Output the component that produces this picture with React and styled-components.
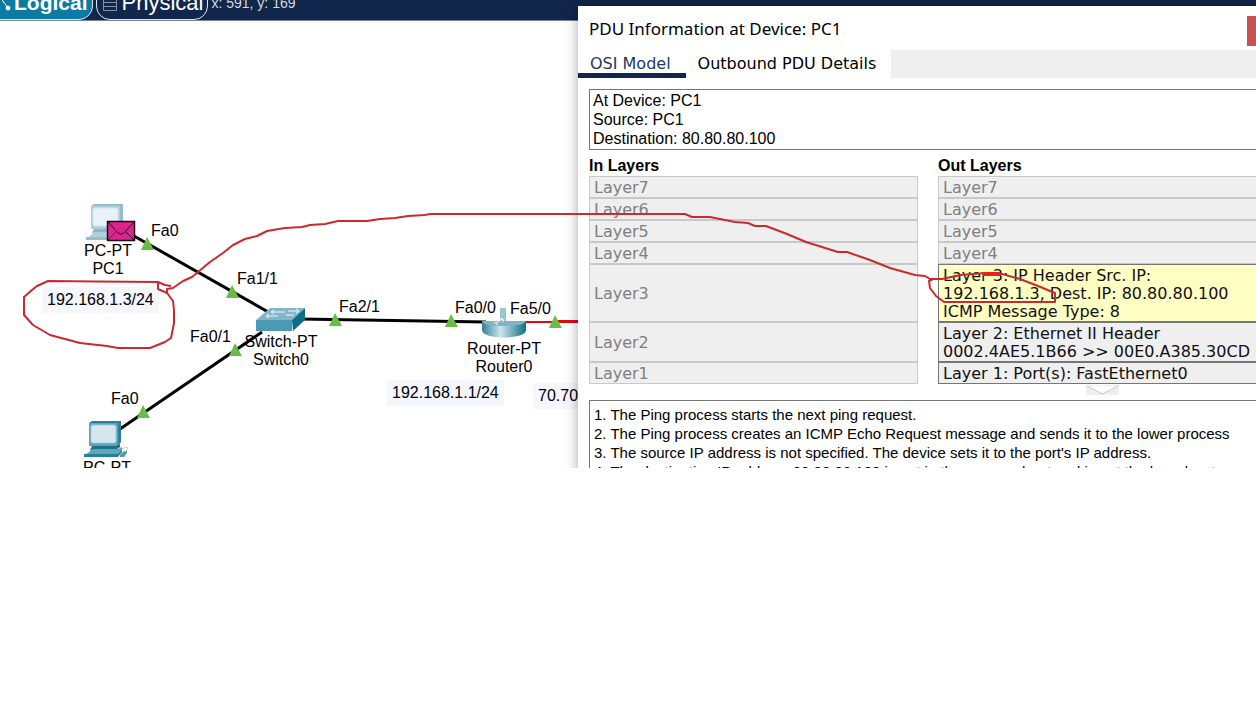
import React from "react";
import styled, { createGlobalStyle } from "styled-components";

const sans = '"Liberation Sans", Arial, sans-serif';
const wide = '"DejaVu Sans", Verdana, sans-serif';

const GlobalStyle = createGlobalStyle`
  * { box-sizing: border-box; }
  body { margin: 0; background: #fff; color: #000; font: 16px/18px ${sans}; overflow-x: hidden; }
  button { margin: 0; font: inherit; color: inherit; }
`;

const Screen = styled.main`
  position: relative;
  display: flex;
  flex-direction: column;
  height: 468px;
  overflow: hidden;
  background: #fff;
`;

const Toolbar = styled.header`
  flex: none;
  display: flex;
  align-items: flex-end;
  gap: 3px;
  height: 21px;
  overflow: hidden;
  background: #10264b;
  border-bottom: 1px solid #7a8494;
`;

const ViewButton = styled.button`
  flex: none;
  display: flex;
  align-items: center;
  gap: ${(p) => (p.$active ? 2 : 4)}px;
  height: 34px;
  margin-left: ${(p) => (p.$active ? -20 : 0)}px;
  padding: 0 4px 0 5px;
  border: 1px solid #dfe8ef;
  border-radius: 14px;
  background: ${(p) => (p.$active ? "#0b7ba3" : "#10264b")};
  color: #fff;
  font: ${(p) => (p.$active ? "bold 21px" : "22px")}/24px ${sans};
`;

const Coordinates = styled.output`
  height: 24px;
  color: #d5dae2;
  font: 14px/14px ${sans};
`;

const Canvas = styled.section`
  position: relative;
  flex: 1;
`;

const Drawing = styled.svg`
  position: absolute;
  left: 0;
  top: 0;
  overflow: visible;
  pointer-events: none;
`;

const Label = styled.span`
  position: absolute;
  left: ${(p) => p.$x}px;
  top: ${(p) => p.$y}px;
  transform: ${(p) => (p.$centred ? "translateX(-50%)" : "none")};
  white-space: pre;
  text-align: center;
  line-height: 18px;
`;

const Note = styled(Label)`
  padding: 4px 5px;
  background: #f5f6fe;
`;

const Dialog = styled.section`
  position: absolute;
  left: 578px;
  right: -22px;
  top: 6px;
  background: #fff;
  box-shadow: 0 0 12px rgba(0, 0, 0, 0.35);
`;

const TitleBar = styled.header`
  display: flex;
  justify-content: space-between;
  height: 44px;
  padding: 10px 0 4px 11px;
`;

const Title = styled.h1`
  margin: 0;
  font: 17px/26px "Noto Sans", "Open Sans", sans-serif;
`;

const CloseButton = styled.button`
  width: 31px;
  height: 30px;
  border: 0;
  background: #c75050;
`;

const Tabs = styled.div`
  display: flex;
  height: 28px;
  background: #efefef;
`;

const Tab = styled.button`
  padding: 5px 15px 0 12px;
  border: 0;
  border-bottom: 5px solid ${(p) => (p.$active ? "#10264b" : "#fff")};
  background: #fff;
  color: ${(p) => (p.$active ? "#1f3861" : "#000")};
  font: 16px/18px ${wide};
`;

const Body = styled.div`
  display: flex;
  flex-direction: column;
  padding: 11px 11px 0;
`;

const Summary = styled.div`
  padding: 1px 3px;
  border: 1px solid #767676;
  line-height: 19px;
`;

const Columns = styled.div`
  display: grid;
  grid-template-columns: 1fr 1fr;
  column-gap: 20px;
  padding-top: 6px;
`;

const Column = styled.div`
  display: flex;
  flex-direction: column;
`;

const Heading = styled.h2`
  margin: 0;
  font: bold 16px/20px ${sans};
`;

const tones = {
  idle: { line: "#c8c8c8", fill: "#efefef", ink: "#808080" },
  used: { line: "#767676", fill: "#efefef", ink: "#111" },
  current: { line: "#767676", fill: "#ffffc4", ink: "#111" },
};

const Layer = styled.button`
  height: ${(p) => 4 + p.$lines * 18}px;
  padding: 2px 4px 0;
  border: 1px solid ${(p) => tones[p.$tone].line};
  background: ${(p) => tones[p.$tone].fill};
  color: ${(p) => tones[p.$tone].ink};
  font: 16px/18px ${wide};
  text-align: left;
  white-space: pre;
`;

const Collapse = styled.button`
  align-self: center;
  display: flex;
  width: 33px;
  height: 10px;
  margin-top: 1px;
  padding: 0;
  border: 0;
  background: #efefef;
`;

const Steps = styled.div`
  height: 90px;
  margin-top: 5px;
  padding: 4px;
  border: 1px solid #767676;
  font-size: 15px;
  line-height: 19px;
  white-space: nowrap;
`;

const Step = styled.p`
  margin: 0;
`;

const inLayers = [
  ["Layer7", 1], ["Layer6", 1], ["Layer5", 1], ["Layer4", 1],
  ["Layer3", 3], ["Layer2", 2], ["Layer1", 1],
];

const outLayers = [
  ["Layer7", 1, "idle"], ["Layer6", 1, "idle"], ["Layer5", 1, "idle"], ["Layer4", 1, "idle"],
  ["Layer 3: IP Header Src. IP:\n192.168.1.3, Dest. IP: 80.80.80.100\nICMP Message Type: 8", 3, "current"],
  ["Layer 2: Ethernet II Header\n0002.4AE5.1B66 >> 00E0.A385.30CD", 2, "used"],
  ["Layer 1: Port(s): FastEthernet0", 1, "used"],
];

const steps = [
  "1. The Ping process starts the next ping request.",
  "2. The Ping process creates an ICMP Echo Request message and sends it to the lower process",
  "3. The source IP address is not specified. The device sets it to the port's IP address.",
  "4. The destination IP address 80.80.80.100 is not in the same subnet and is not the broadcast",
];

const portLights = [[147, 239], [232, 287], [235, 345], [335, 315], [451, 316], [555, 317], [143, 407]];

const ports = [
  ["Fa0", 151, 201], ["Fa1/1", 237, 249], ["Fa2/1", 339, 277], ["Fa0/0", 455, 278],
  ["Fa5/0", 510, 279], ["Fa0/1", 190, 307], ["Fa0", 111, 369],
];

const devices = [
  ["PC-PT\nPC1", 108, 221], ["Switch-PT\nSwitch0", 281, 312],
  ["Router-PT\nRouter0", 504, 319], ["PC-PT", 107, 438],
];

function Computer({ x, y, faded }) {
  return (
    <g transform={`translate(${x} ${y})`} opacity={faded ? 0.5 : 1}>
      <path d="M5 2 L8 0 H37 V21 L34 25 H5 Z" fill="#2b7f98" />
      <path d="M5 2 H34 V25 H5 Z" fill="#5ba3b8" />
      <rect x="7" y="4" width="25" height="18" rx="2" fill="#d5e6ee" stroke="#a9cbd7" />
      <path d="M8 25 H32 L36 23 V26 L32 29 H6 Z" fill="#1f6f88" />
      <path d="M5 31 L8 28 H34 L38 26 V31 L34 35 H0 Z" fill="#5fa6ba" />
      <path d="M0 33 H34 L38 29 V31 L34 36 H0 Z" fill="#2b8099" />
      <path d="M36 34 L40 30 H43 V32 L40 36 H36 Z" fill="#4c9ab1" />
      <path d="M38 28 L43 26 L44 28 L41 31" fill="none" stroke="#b9d5df" />
    </g>
  );
}

export default function App() {
  return (
    <>
      <GlobalStyle />
      <Screen>
        <Toolbar>
          <ViewButton $active>
            <svg width="26" height="24" viewBox="0 0 26 24" fill="none" stroke="#fff">
              <path d="M14 6 L22 17 M14 6 L6 17" />
              <circle cx="22" cy="17" r="2" fill="#fff" />
              <circle cx="6" cy="17" r="2" fill="#fff" />
            </svg>
            Logical
          </ViewButton>
          <ViewButton>
            <svg width="16" height="24" viewBox="0 0 16 24" fill="none" stroke="#8390a6">
              <path d="M1.500 3.500 H14.500 V19.500 H1.500 Z M2 7.500 H14 M2 11.500 H14 M2 15.500 H14" />
            </svg>
            Physical
          </ViewButton>
          <Coordinates>x: 591, y: 169</Coordinates>
        </Toolbar>

        <Canvas aria-label="Logical topology">
          <Drawing width="578" height="447" viewBox="0 21 578 447">
            <g stroke="#000" strokeWidth="3" fill="none">
              <path d="M134 236 L270 313" />
              <path d="M262 332 L120 429" />
              <path d="M300 319 L486 322" />
            </g>
            <path d="M520 322 H556" stroke="#dd0a14" strokeWidth="2" />
            <path d="M556 321.500 H578" stroke="#dd0a14" strokeWidth="3" />
            <Computer x={86} y={204} faded />
            <Computer x={84} y={421} />
            <g stroke="#1c0714" strokeWidth="1">
              <rect x="107.500" y="221.500" width="27" height="19" fill="#dc2390" strokeWidth="1.500" />
              <path d="M108 222 L117 232 Q121 236 125 232 L134 222 M108 240 L117 231 M134 240 L125 231" fill="none" />
            </g>
            <g>
              <path d="M256 320 L270 308 H305 L292 320 Z" fill="#83b6c8" />
              <path d="M256 320 H292 V331 H256 Z" fill="#4b99b2" />
              <path d="M292 320 L305 308 V320 L293 331 Z" fill="#0c6d88" />
              <path d="M272 312 H285 M288 311 H298 M267 316 H278 M286 315 H294 M274 310 L271 312 L274 314 M296 309 L299 311 L296 313 M269 314 L266 316 L269 318" fill="none" stroke="#eff7fa" />
            </g>
            <g>
              <defs>
                <linearGradient id="router" x1="0" x2="1">
                  <stop offset="0" stopColor="#2f8298" />
                  <stop offset="0.420" stopColor="#cfe4eb" />
                  <stop offset="1" stopColor="#0f6f88" />
                </linearGradient>
              </defs>
              <rect x="500" y="308" width="6" height="14" fill="#9dc2d0" />
              <path d="M482 321 H526 V330 C526 340 482 340 482 330 Z" fill="url(#router)" />
              <path d="M482 321 H526 Q524 326 504 326 Q484 326 482 321 Z" fill="#7fb2c3" />
              <path d="M496 323 L502 319 M499 319 H503 V322 M498 325 L494 322" fill="none" stroke="#fff" />
            </g>
            {portLights.map(([x, y]) => (
              <path key={`${x}-${y}`} d={`M${x} ${y - 2} L${x + 7} ${y + 11} H${x - 6} Z`} fill="#69bd45" />
            ))}
          </Drawing>
          {ports.map(([text, x, y]) => (
            <Label key={`${text}-${x}`} $x={x} $y={y}>{text}</Label>
          ))}
          {devices.map(([text, x, y]) => (
            <Label key={`${text}-${x}`} $x={x} $y={y} $centred>{text}</Label>
          ))}
          <Note $x={42} $y={266}>192.168.1.3/24</Note>
          <Note $x={387} $y={359}>192.168.1.1/24</Note>
          <Note $x={533} $y={362}>70.70</Note>
        </Canvas>

        <Dialog role="dialog" aria-labelledby="pdu-title">
          <TitleBar>
            <Title id="pdu-title">PDU Information at Device: PC1</Title>
            <CloseButton aria-label="Close" />
          </TitleBar>
          <Tabs role="tablist">
            <Tab role="tab" aria-selected="true" $active>OSI Model</Tab>
            <Tab role="tab" aria-selected="false">Outbound PDU Details</Tab>
          </Tabs>
          <Body>
            <Summary>
              At Device: PC1<br />Source: PC1<br />Destination: 80.80.80.100
            </Summary>
            <Columns>
              <Column>
                <Heading>In Layers</Heading>
                {inLayers.map(([text, lines]) => (
                  <Layer key={text} $lines={lines} $tone="idle">{text}</Layer>
                ))}
              </Column>
              <Column>
                <Heading>Out Layers</Heading>
                {outLayers.map(([text, lines, tone]) => (
                  <Layer key={text} $lines={lines} $tone={tone}>{text}</Layer>
                ))}
                <Collapse aria-label="Collapse layers">
                  <svg width="33" height="10" viewBox="0 0 33 10">
                    <path d="M1 1 L16.500 9 L32 1 Z" fill="#fff" />
                    <path d="M1 1 L16.500 9 L32 1" fill="none" stroke="#c8c8c8" />
                  </svg>
                </Collapse>
              </Column>
            </Columns>
            <Steps>
              {steps.map((text) => <Step key={text}>{text}</Step>)}
            </Steps>
          </Body>
        </Dialog>

        <Drawing width="1256" height="468" viewBox="0 0 1256 468" fill="none" stroke="#c92a2e" strokeWidth="2" strokeLinejoin="round">
          <path d="M158 282 V289 L167 293 L173 301 L174 310 V323 L171 338 L165 342 L150 348 L118 348 L107 346 L80 343 L50 335 L33 325 L24 315 V297 L32 290 L37 286 L48 281 L97 281.500 L158 282 L165 285 L171 286" />
          <path d="M167 294 V289 L173 288 L183 281 L192 277 L198 272 L210 262 L223 253 L233 245 L245 239 L257 236 L267 231 L285 228 L302 227 L310 225 L325 224 L338 221 H367 L380 219 L395 218 L408 216 L425 215 L430 214 H685 L692 217 H710 L735 222 L748 223 L755 226 H766 L787 234 L806 242 L838 252 H847 L870 260 L890 268 L915 275 L925 276 L930 279 H942 L960 275 L985 273 L1002 274 L1020 279 L1038 286 L1055 293 V302 H944 L936 296 L930 288 L929 281 L933 279" />
          <path d="M983 274 H1000" stroke="#e8201c" strokeWidth="4" />
        </Drawing>
      </Screen>
    </>
  );
}
